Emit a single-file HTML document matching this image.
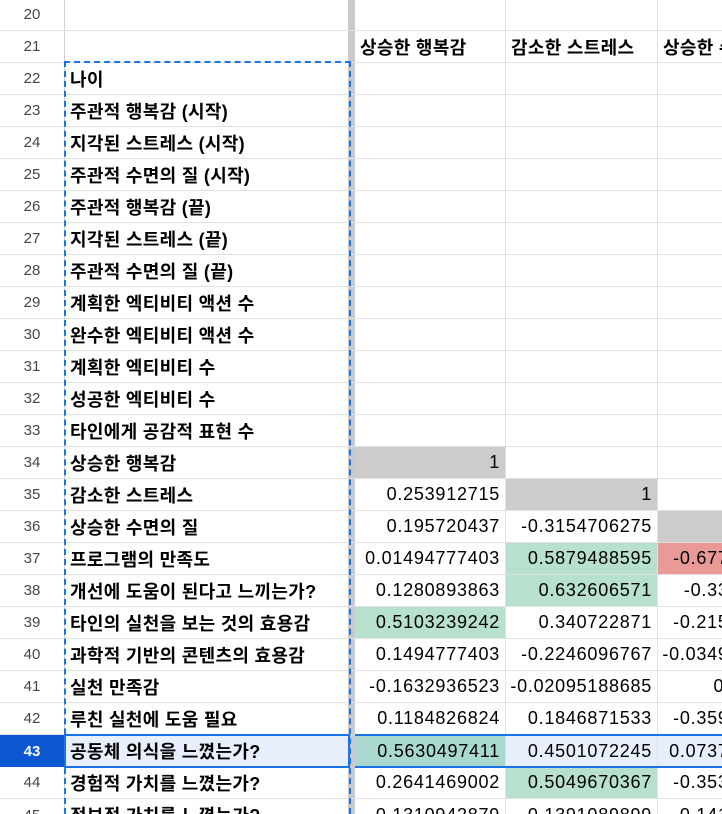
<!DOCTYPE html>
<html><head><meta charset="utf-8"><style>
*{box-sizing:border-box;margin:0;padding:0}
html,body{width:722px;height:814px;overflow:hidden}
body{background:#fff;font-family:"Liberation Sans","Noto Sans CJK KR",sans-serif;font-size:18px;color:#000;position:relative}
.r{position:absolute;left:0;width:722px;overflow:hidden;height:32px;display:flex;border-bottom:1px solid #e1e1e1}
.r div{flex-shrink:0;height:100%;display:flex;align-items:center;white-space:nowrap;overflow:hidden}
.h{width:65px;justify-content:center;color:#444;font-size:15px;border-right:1px solid #d0d0d0}
.a{width:283px;padding-left:5px;font-weight:bold;letter-spacing:0.3px}
.d{width:7px;background:#cacaca}
.b,.c,.e{width:151px;justify-content:flex-end;padding-right:5px;border-right:1px solid #e1e1e1;letter-spacing:0.75px}
.c,.e{width:152px}
.t{justify-content:flex-start!important;padding-left:5px;font-weight:bold;letter-spacing:0.3px!important}
.g{background:#cccccc}.gr{background:#b7e1cd}.rd{background:#e99a97}
.sel{background:#e8effc}
</style></head><body>
<div class="r" style="top:-1px"><div class="h">20</div><div class="a"></div><div class="d"></div><div class="b"></div><div class="c"></div><div class="e"></div></div>
<div class="r" style="top:31px"><div class="h">21</div><div class="a"></div><div class="d"></div><div class="b t">상승한 행복감</div><div class="c t">감소한 스트레스</div><div class="e t">상승한 수면의 질</div></div>
<div class="r" style="top:63px"><div class="h">22</div><div class="a">나이</div><div class="d"></div><div class="b"></div><div class="c"></div><div class="e"></div></div>
<div class="r" style="top:95px"><div class="h">23</div><div class="a">주관적 행복감 (시작)</div><div class="d"></div><div class="b"></div><div class="c"></div><div class="e"></div></div>
<div class="r" style="top:127px"><div class="h">24</div><div class="a">지각된 스트레스 (시작)</div><div class="d"></div><div class="b"></div><div class="c"></div><div class="e"></div></div>
<div class="r" style="top:159px"><div class="h">25</div><div class="a">주관적 수면의 질 (시작)</div><div class="d"></div><div class="b"></div><div class="c"></div><div class="e"></div></div>
<div class="r" style="top:191px"><div class="h">26</div><div class="a">주관적 행복감 (끝)</div><div class="d"></div><div class="b"></div><div class="c"></div><div class="e"></div></div>
<div class="r" style="top:223px"><div class="h">27</div><div class="a">지각된 스트레스 (끝)</div><div class="d"></div><div class="b"></div><div class="c"></div><div class="e"></div></div>
<div class="r" style="top:255px"><div class="h">28</div><div class="a">주관적 수면의 질 (끝)</div><div class="d"></div><div class="b"></div><div class="c"></div><div class="e"></div></div>
<div class="r" style="top:287px"><div class="h">29</div><div class="a">계획한 엑티비티 액션 수</div><div class="d"></div><div class="b"></div><div class="c"></div><div class="e"></div></div>
<div class="r" style="top:319px"><div class="h">30</div><div class="a">완수한 엑티비티 액션 수</div><div class="d"></div><div class="b"></div><div class="c"></div><div class="e"></div></div>
<div class="r" style="top:351px"><div class="h">31</div><div class="a">계획한 엑티비티 수</div><div class="d"></div><div class="b"></div><div class="c"></div><div class="e"></div></div>
<div class="r" style="top:383px"><div class="h">32</div><div class="a">성공한 엑티비티 수</div><div class="d"></div><div class="b"></div><div class="c"></div><div class="e"></div></div>
<div class="r" style="top:415px"><div class="h">33</div><div class="a">타인에게 공감적 표현 수</div><div class="d"></div><div class="b"></div><div class="c"></div><div class="e"></div></div>
<div class="r" style="top:447px"><div class="h">34</div><div class="a">상승한 행복감</div><div class="d"></div><div class="b g">1</div><div class="c"></div><div class="e"></div></div>
<div class="r" style="top:479px"><div class="h">35</div><div class="a">감소한 스트레스</div><div class="d"></div><div class="b">0.253912715</div><div class="c g">1</div><div class="e"></div></div>
<div class="r" style="top:511px"><div class="h">36</div><div class="a">상승한 수면의 질</div><div class="d"></div><div class="b">0.195720437</div><div class="c">-0.3154706275</div><div class="e g">1</div></div>
<div class="r" style="top:543px"><div class="h">37</div><div class="a">프로그램의 만족도</div><div class="d"></div><div class="b">0.01494777403</div><div class="c gr">0.5879488595</div><div class="e rd">-0.6771234567</div></div>
<div class="r" style="top:575px"><div class="h">38</div><div class="a">개선에 도움이 된다고 느끼는가?</div><div class="d"></div><div class="b">0.1280893863</div><div class="c gr">0.632606571</div><div class="e">-0.330123456</div></div>
<div class="r" style="top:607px"><div class="h">39</div><div class="a">타인의 실천을 보는 것의 효용감</div><div class="d"></div><div class="b gr">0.5103239242</div><div class="c">0.340722871</div><div class="e">-0.2151234567</div></div>
<div class="r" style="top:639px"><div class="h">40</div><div class="a">과학적 기반의 콘텐츠의 효용감</div><div class="d"></div><div class="b">0.1494777403</div><div class="c">-0.2246096767</div><div class="e">-0.03491234567</div></div>
<div class="r" style="top:671px"><div class="h">41</div><div class="a">실천 만족감</div><div class="d"></div><div class="b">-0.1632936523</div><div class="c">-0.02095188685</div><div class="e">0.1123456</div></div>
<div class="r" style="top:703px"><div class="h">42</div><div class="a">루친 실천에 도움 필요</div><div class="d"></div><div class="b">0.1184826824</div><div class="c">0.1846871533</div><div class="e">-0.3591234567</div></div>
<div class="r" style="top:735px;border-bottom:none"><div class="h" style="background:#0b57d0;color:#fff;font-weight:bold">43</div><div class="a sel">공동체 의식을 느꼈는가?</div><div class="d"></div><div class="b" style="background:#a9d8cf">0.5630497411</div><div class="c sel">0.4501072245</div><div class="e sel">0.07371234567</div></div>
<div class="r" style="top:767px"><div class="h">44</div><div class="a">경험적 가치를 느꼈는가?</div><div class="d"></div><div class="b">0.2641469002</div><div class="c gr">0.5049670367</div><div class="e">-0.3531234567</div></div>
<div class="r" style="top:799px;height:15px;border-bottom:none;align-items:flex-start"><div class="h" style="height:32px">45</div><div class="a" style="height:32px">정보적 가치를 느꼈는가?</div><div class="d"></div><div class="b" style="height:32px">0.1310942879</div><div class="c" style="height:32px">0.1391089899</div><div class="e" style="height:32px">-0.1412345678</div></div>
<div style="position:absolute;left:355px;top:734px;width:367px;height:2px;background:#1a73e8"></div>
<div style="position:absolute;left:355px;top:766px;width:367px;height:2px;background:#1a73e8"></div>
<div style="position:absolute;left:64px;top:734px;width:286px;height:34px;border:2px solid #1a73e8"></div>
<div style="position:absolute;left:64px;top:61px;width:287px;height:753px;border:2px dashed #1a73e8;border-bottom:none"></div>
</body></html>
